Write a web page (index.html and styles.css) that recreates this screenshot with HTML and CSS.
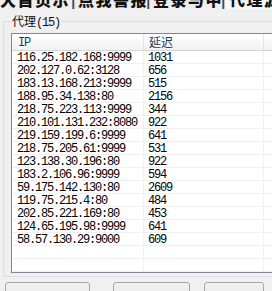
FILE: index.html
```html
<!DOCTYPE html>
<html>
<head>
<meta charset="utf-8">
<link rel="stylesheet" href="styles.css">
</head>
<body>
<div class="tabs">
  <div class="tab t1"><span>大首页示</span></div>
  <div class="sep"></div>
  <div class="tab t2"><span>点我警报</span></div>
  <div class="sep"></div>
  <div class="tab t3"><span>登录与中</span></div>
  <div class="sep"></div>
  <div class="tab active"><span>代理源</span></div>
</div>
<fieldset class="group">
  <legend><span class="cjk">代理</span><span class="mono">(15)</span></legend>
  <div class="list">
    <div class="head"><div class="c1 mono">IP</div><div class="c2 cjk">延迟</div><div class="c3"></div></div>
    <div class="row"><div class="c1">116.25.182.168:9999</div><div class="c2">1031</div><div class="c3"></div></div>
    <div class="row"><div class="c1">202.127.0.62:3128</div><div class="c2">656</div><div class="c3"></div></div>
    <div class="row"><div class="c1">183.13.168.213:9999</div><div class="c2">515</div><div class="c3"></div></div>
    <div class="row"><div class="c1">188.95.34.138:80</div><div class="c2">2156</div><div class="c3"></div></div>
    <div class="row"><div class="c1">218.75.223.113:9999</div><div class="c2">344</div><div class="c3"></div></div>
    <div class="row"><div class="c1">210.101.131.232:8080</div><div class="c2">922</div><div class="c3"></div></div>
    <div class="row"><div class="c1">219.159.199.6:9999</div><div class="c2">641</div><div class="c3"></div></div>
    <div class="row"><div class="c1">218.75.205.61:9999</div><div class="c2">531</div><div class="c3"></div></div>
    <div class="row"><div class="c1">123.138.30.196:80</div><div class="c2">922</div><div class="c3"></div></div>
    <div class="row"><div class="c1">183.2.106.96:9999</div><div class="c2">594</div><div class="c3"></div></div>
    <div class="row"><div class="c1">59.175.142.130:80</div><div class="c2">2609</div><div class="c3"></div></div>
    <div class="row"><div class="c1">119.75.215.4:80</div><div class="c2">484</div><div class="c3"></div></div>
    <div class="row"><div class="c1">202.85.221.169:80</div><div class="c2">453</div><div class="c3"></div></div>
    <div class="row"><div class="c1">124.65.195.98:9999</div><div class="c2">641</div><div class="c3"></div></div>
    <div class="row"><div class="c1">58.57.130.29:9000</div><div class="c2">609</div><div class="c3"></div></div>
    <div class="row"><div class="c1"></div><div class="c2"></div><div class="c3"></div></div>
    <div class="row"><div class="c1"></div><div class="c2"></div><div class="c3"></div></div>
    <div class="row"><div class="c1"></div><div class="c2"></div><div class="c3"></div></div>
  </div>
</fieldset>
<div class="buttons">
  <button class="btn b1"></button>
  <button class="btn b2"></button>
  <button class="btn b3"></button>
</div>
</body>
</html>
```

FILE: styles.css
```css
html, body {
  margin: 0;
  padding: 0;
}
body {
  width: 272px;
  height: 291px;
  overflow: hidden;
  background: #f0f0f0;
  font-family: "Liberation Mono", "Noto Sans CJK SC", monospace;
  color: #000;
}
.cjk {
  font-family: "Noto Sans CJK SC", sans-serif;
  font-size: 12px;
}
.mono {
  font-family: "Liberation Mono", monospace;
  font-size: 12px;
  letter-spacing: -1.2px;
}
.tabs {
  display: flex;
  height: 9px;
  overflow: hidden;
  width: 272px;
}
.tab {
  background: #eeeeee;
  overflow: hidden;
}
.tab span {
  display: block;
  font-family: "Noto Sans CJK SC", sans-serif;
  font-weight: 900;
  font-size: 16px;
  line-height: 16px;
  margin-top: -9px;
  white-space: nowrap;
  color: #111;
  letter-spacing: 1.5px;
}
.t1 { width: 72px; }
.t2 { width: 72px; padding-left: 3px; box-sizing: border-box; }
.t3 { width: 72px; padding-left: 3px; box-sizing: border-box; }
.active {
  flex: 1;
  background: #f6faff;
  padding-left: 4px;
}
.sep {
  width: 1px;
  background: #4a4a4a;
  border-left: 1px solid #8a8a8a;
  border-right: 1px solid #c0c0c0;
}
.group {
  display: block;
  margin: 5px 0 0 3px;
  width: 269px;
  min-width: 0;
  padding: 5px 0 3px 7px;
  border: 1px solid #d5dfe5;
  border-right: none;
  border-radius: 3px 0 0 3px;
  box-sizing: border-box;
}
.group legend {
  padding: 0 2px 0 1px;
  line-height: 14px;
  height: 14px;
  color: #111;
}
.list {
  height: 240px;
  box-sizing: border-box;
  border: 1px solid #828790;
  border-right: none;
  background: #fff;
  overflow: hidden;
}
.head {
  display: flex;
  height: 17px;
  box-sizing: border-box;
  border-bottom: 1px solid #d5d5d5;
  background: linear-gradient(#ffffff, #f1f2f4);
  color: #1e395b;
  line-height: 16px;
}
.head .c1 { padding-left: 6px; padding-top: 1px; }
.head .c2 { padding-left: 5px; }
.head .c1, .head .c2 { border-right: 1px solid #e5e5e5; }
.row {
  display: flex;
  height: 13px;
  box-sizing: border-box;
  border-bottom: 1px solid #f0f0f0;
  font-family: "Liberation Mono", monospace;
  font-size: 12px;
  letter-spacing: -1.2px;
  line-height: 13px;
}
.row .c1, .row .c2 {
  position: relative;
  top: 1px;
}
.c1 {
  width: 132px;
  box-sizing: border-box;
  padding-left: 5px;
  white-space: nowrap;
}
.c2 {
  width: 120px;
  box-sizing: border-box;
  padding-left: 4px;
  white-space: nowrap;
}
.row .c2, .row .c1 {
  border-right: 1px solid #f0f0f0;
}
.c3 { flex: 1; min-width: 0; }
.buttons {
  display: flex;
  margin-top: 5px;
}
.btn {
  height: 23px;
  padding: 0;
  border: 1px solid #a7a7a7;
  border-radius: 3px;
  background: linear-gradient(#f2f2f2, #ebebeb 50%, #dddddd 51%, #cfcfcf);
}
.b1 { margin-left: 5px; width: 85px; }
.b2 { margin-left: 23px; width: 77px; }
.b3 { margin-left: 14px; width: 60px; }
```
